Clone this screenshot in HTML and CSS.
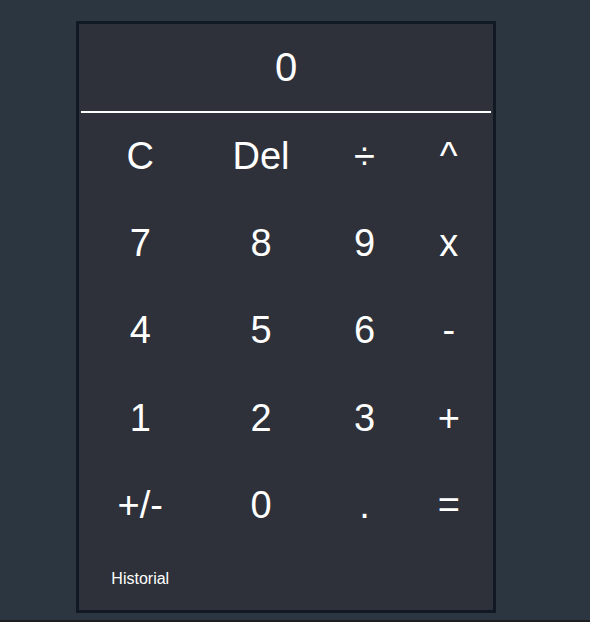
FILE: index.html
```html
<!DOCTYPE html>
<html lang="es">
<head>
<meta charset="utf-8">
<title>Calculadora</title>
<link rel="stylesheet" href="styles.css">
</head>
<body>
<div class="page">
  <div class="calc">
    <div class="display">0</div>
    <div class="keys">
      <button class="key">C</button>
      <button class="key">Del</button>
      <button class="key">÷</button>
      <button class="key">^</button>
      <button class="key">7</button>
      <button class="key">8</button>
      <button class="key">9</button>
      <button class="key">x</button>
      <button class="key">4</button>
      <button class="key">5</button>
      <button class="key">6</button>
      <button class="key">-</button>
      <button class="key">1</button>
      <button class="key">2</button>
      <button class="key">3</button>
      <button class="key">+</button>
      <button class="key">+/-</button>
      <button class="key">0</button>
      <button class="key">.</button>
      <button class="key">=</button>
      <button class="history">Historial</button>
    </div>
  </div>
</div>
</body>
</html>
```
FILE: styles.css
```css
html {
  background: #1f1f1f;
}
body {
  margin: 0;
  height: 620px;
  background: #2c3640;
  font-family: "Liberation Sans", Arial, sans-serif;
  color: #ffffff;
}
.page {
  padding: 21px 0 0 76px;
}
.calc {
  width: 414px;
  height: 586px;
  border: 3px solid #111a24;
  background: #2e3139;
  display: flex;
  flex-direction: column;
}
.display {
  height: 87px;
  display: flex;
  align-items: center;
  justify-content: center;
  font-size: 40px;
  border-bottom: 2px solid #ffffff;
  margin: 0 2px;
}
.keys {
  margin: 0 2px;
  display: grid;
  grid-template-columns: 118.5px 123px 84px 84.5px;
  grid-template-rows: repeat(5, 87.2px) 60px;
}
.key,
.history {
  background: none;
  border: none;
  padding: 0;
  margin: 0;
  color: #ffffff;
  font-family: "Liberation Sans", Arial, sans-serif;
  display: flex;
  align-items: center;
  justify-content: center;
  cursor: pointer;
}
.key {
  font-size: 38px;
}
.history {
  font-size: 16px;
}
```
